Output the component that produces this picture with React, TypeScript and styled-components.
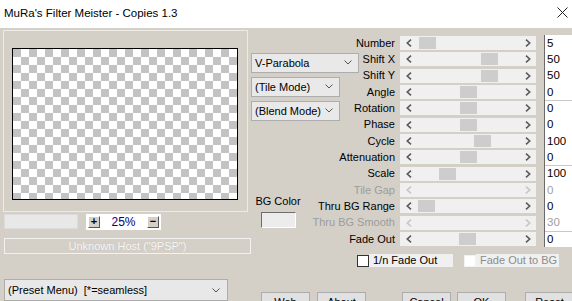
import React from 'react';
import styled, { createGlobalStyle } from 'styled-components';

const GlobalStyle = createGlobalStyle`
  html, body {
    margin: 0;
    padding: 0;
  }
  body {
    width: 572px;
    height: 301px;
    overflow: hidden;
    background: #d4d0c8;
    font-family: "Liberation Sans", Arial, sans-serif;
    font-size: 11px;
    color: #000;
  }
`;

type Param = {
  label: string;
  value: string;
  thumb?: number;
  disabled?: boolean;
  top?: boolean;
};

const params: Param[] = [
  { label: 'Number', value: '5', thumb: 19 },
  { label: 'Shift X', value: '50', thumb: 81 },
  { label: 'Shift Y', value: '50', thumb: 81 },
  { label: 'Angle', value: '0', thumb: 60 },
  { label: 'Rotation', value: '0', thumb: 60, top: true },
  { label: 'Phase', value: '0', thumb: 60 },
  { label: 'Cycle', value: '100', thumb: 74 },
  { label: 'Attenuation', value: '0', thumb: 60 },
  { label: 'Scale', value: '100', thumb: 39, top: true },
  { label: 'Tile Gap', value: '0', disabled: true },
  { label: 'Thru BG Range', value: '0', thumb: 18 },
  { label: 'Thru BG Smooth', value: '30', disabled: true },
  { label: 'Fade Out', value: '0', thumb: 59, top: true },
];

const Chevron = () => (
  <svg width="8" height="5" viewBox="0 0 8 5">
    <polyline points="0.5,0.5 4,4 7.5,0.5" fill="none" stroke="#555" strokeWidth="1" />
  </svg>
);

const Arrow = ({ dir, dim }: { dir: 'l' | 'r'; dim?: boolean }) => (
  <svg width="6" height="8" viewBox="0 0 6 8">
    <polyline
      points={dir === 'l' ? '5,0.7 1.3,4 5,7.3' : '1,0.7 4.7,4 1,7.3'}
      fill="none"
      stroke={dim ? '#c6c6c6' : '#5a5a5a'}
      strokeWidth="1.6"
    />
  </svg>
);

const App = () => {
  return (
    <>
      <GlobalStyle />
      <Window>
        <TitleBar>
          <Title>MuRa's Filter Meister - Copies 1.3</Title>
          <Close>
            <svg width="11" height="11" viewBox="0 0 11 11">
              <path d="M0.5 0.5 L10.5 10.5 M10.5 0.5 L0.5 10.5" stroke="#222" strokeWidth="1" />
            </svg>
          </Close>
        </TitleBar>

        <Body>
          <LeftCol>
            <PreviewPanel>
              <Preview />
            </PreviewPanel>
            <ZoomRow>
              <BlankField />
              <ZoomBox>
                <ZoomButton>+</ZoomButton>
                <Percent>25%</Percent>
                <ZoomButton>−</ZoomButton>
              </ZoomBox>
            </ZoomRow>
            <Status>Unknown Host ("9PSP")</Status>
            <PresetCombo>
              <span>(Preset Menu)&nbsp; [*=seamless]</span>
              <Chevron />
            </PresetCombo>
          </LeftCol>

          <RightCol>
            <TopArea>
              <MiddleControls>
                <Combo $width={108}>
                  <span>V-Parabola</span>
                  <Chevron />
                </Combo>
                <Combo $width={89}>
                  <span>(Tile Mode)</span>
                  <Chevron />
                </Combo>
                <Combo $width={89}>
                  <span>(Blend Mode)</span>
                  <Chevron />
                </Combo>
                <BgGroup>
                  <BgLabel>BG Color</BgLabel>
                  <Swatch />
                </BgGroup>
              </MiddleControls>

              <ParamList>
                {params.map((p) => (
                  <ParamRow key={p.label}>
                    <ParamLabel $disabled={p.disabled}>{p.label}</ParamLabel>
                    <Track>
                      <Arrow dir="l" dim={p.disabled} />
                      <Arrow dir="r" dim={p.disabled} />
                      {p.thumb !== undefined && <Thumb $left={p.thumb} />}
                    </Track>
                    <ValueBox $disabled={p.disabled} $top={p.top}>
                      {p.value}
                    </ValueBox>
                  </ParamRow>
                ))}
              </ParamList>
            </TopArea>

            <CheckRow>
              <CheckBox />
              <CheckLabel $width={84}>1/n Fade Out</CheckLabel>
              <CheckBox $disabled />
              <CheckLabel $width={83} $disabled>
                Fade Out to BG
              </CheckLabel>
            </CheckRow>

            <ButtonRow>
              <Button $gap={0}>Web</Button>
              <Button $gap={7}>About</Button>
              <Button $gap={36}>Cancel</Button>
              <Button $gap={6}>OK</Button>
              <Button $gap={19}>Reset</Button>
            </ButtonRow>
          </RightCol>
        </Body>
      </Window>
    </>
  );
};

export default App;

const Window = styled.div`
  width: 572px;
  height: 301px;
  display: flex;
  flex-direction: column;
  overflow: hidden;
  background: #d4d0c8;
`;

const TitleBar = styled.div`
  flex: none;
  height: 28px;
  background: #fff;
  display: flex;
  justify-content: space-between;
  padding-left: 4px;
`;

const Title = styled.span`
  font-size: 11.5px;
  line-height: 26px;
  color: #000;
`;

const Close = styled.div`
  margin: 7px 4px 0 0;
  height: 11px;
`;

const Body = styled.div`
  flex: 1;
  display: flex;
  min-height: 0;
`;

const LeftCol = styled.div`
  flex: none;
  width: 251px;
  box-sizing: border-box;
  padding: 2px 0 0 4px;
  display: flex;
  flex-direction: column;
`;

const PreviewPanel = styled.div`
  width: 245px;
  height: 183px;
  margin-left: -1px;
  box-sizing: border-box;
  border: 1px solid #ecebe6;
  padding: 17px 0 0 8px;
`;

const Preview = styled.div`
  width: 226px;
  height: 152px;
  box-sizing: border-box;
  border: 1px solid #000;
  background: repeating-conic-gradient(#fff 0 25%, #c3c3c3 0 50%) 0 0 / 16px 16px;
`;

const ZoomRow = styled.div`
  display: flex;
  align-items: flex-start;
  gap: 8px;
  margin-top: 2px;
`;

const BlankField = styled.div`
  width: 74px;
  height: 15px;
  box-sizing: border-box;
  background: #e8e8e8;
  border: 1px solid #dcdcdc;
`;

const ZoomBox = styled.div`
  width: 75px;
  height: 16px;
  box-sizing: border-box;
  background: #fff;
  display: flex;
  align-items: center;
  justify-content: space-between;
  padding: 0 2px;
`;

const ZoomButton = styled.div`
  width: 12px;
  height: 12px;
  box-sizing: border-box;
  background: #d4d0c8;
  border: 1px solid;
  border-color: #fff #555 #555 #fff;
  font-weight: bold;
  font-size: 11px;
  line-height: 9px;
  text-align: center;
`;

const Percent = styled.span`
  color: #000080;
  font-size: 12px;
  line-height: 16px;
`;

const Status = styled.div`
  margin-top: 8px;
  width: 247px;
  height: 16px;
  box-sizing: border-box;
  border: 1px solid #f2f2f0;
  color: #f8f8f8;
  text-shadow: 0 0 1px #b8b5ae;
  text-align: center;
  line-height: 14px;
`;

const PresetCombo = styled.div`
  margin-top: 25px;
  width: 224px;
  height: 22px;
  box-sizing: border-box;
  background: #e8e8e8;
  border: 1px solid #adadad;
  padding: 0 7px 0 3px;
  display: flex;
  align-items: center;
  justify-content: space-between;
  line-height: 20px;
`;

const RightCol = styled.div`
  flex: 1;
  min-width: 0;
  display: flex;
  flex-direction: column;
  padding-top: 6.83px;
`;

const TopArea = styled.div`
  display: grid;

  > * {
    grid-area: 1 / 1;
  }
`;

const MiddleControls = styled.div`
  display: flex;
  flex-direction: column;
  align-items: flex-start;
  gap: 4px;
  padding-top: 18.17px;
`;

const Combo = styled.div<{ $width: number }>`
  width: ${(p) => p.$width}px;
  height: 20px;
  box-sizing: border-box;
  background: #e9e9e9;
  border: 1px solid #adadad;
  padding: 0 6px 0 3px;
  display: flex;
  align-items: center;
  justify-content: space-between;
  line-height: 18px;
  white-space: nowrap;
`;

const BgGroup = styled.div`
  margin: 70px 0 0 6px;
  width: 42px;
  display: flex;
  flex-direction: column;
  align-items: center;
  gap: 4px;
`;

const BgLabel = styled.span`
  line-height: 13px;
  white-space: nowrap;
`;

const Swatch = styled.div`
  width: 35px;
  height: 16px;
  box-sizing: border-box;
  background: #ececec;
  border: 1px solid;
  border-color: #6d6d6d #fff #fff #6d6d6d;
`;

const ParamList = styled.div`
  display: flex;
  flex-direction: column;
`;

const ParamRow = styled.div`
  display: flex;
  align-items: center;
  height: 16.33px;
`;

const ParamLabel = styled.span<{ $disabled?: boolean }>`
  flex: none;
  width: 149px;
  box-sizing: border-box;
  padding-right: 5px;
  text-align: right;
  white-space: nowrap;
  line-height: 16.33px;
  color: ${(p) => (p.$disabled ? '#9c9c9c' : '#000')};
`;

const Track = styled.div`
  flex: none;
  position: relative;
  width: 136px;
  height: 14px;
  box-sizing: border-box;
  background: #f0f0f0;
  display: flex;
  align-items: center;
  justify-content: space-between;
  padding: 0 5px 0 6px;
`;

const Thumb = styled.div<{ $left: number }>`
  position: absolute;
  top: 1px;
  left: ${(p) => p.$left}px;
  width: 17px;
  height: 12px;
  background: #cdcdcd;
`;

const ValueBox = styled.div<{ $disabled?: boolean; $top?: boolean }>`
  flex: 1;
  align-self: stretch;
  margin-left: 8px;
  background: #fff;
  border-left: 1px solid #6a6a6a;
  box-shadow: ${(p) => (p.$top ? 'inset 0 1px 0 #c8c8c8' : 'none')};
  padding-left: 2px;
  font-size: 11.5px;
  line-height: 16.33px;
  color: ${(p) => (p.$disabled ? '#a0a0a0' : '#000')};
`;

const CheckRow = styled.div`
  margin-top: 7px;
  padding-left: 106px;
  display: flex;
  align-items: center;
  height: 13px;
`;

const CheckBox = styled.div<{ $disabled?: boolean }>`
  flex: none;
  width: 12px;
  height: 12px;
  box-sizing: border-box;
  background: #fff;
  border: 1px solid ${(p) => (p.$disabled ? '#f2f2f2' : '#333')};
  margin-left: ${(p) => (p.$disabled ? 11 : 0)}px;
`;

const CheckLabel = styled.span<{ $width: number; $disabled?: boolean }>`
  flex: none;
  width: ${(p) => p.$width}px;
  height: 13px;
  box-sizing: border-box;
  padding-left: 4px;
  background: #f0f0f0;
  line-height: 13px;
  white-space: nowrap;
  color: ${(p) => (p.$disabled ? '#8c8c8c' : '#000')};
`;

const ButtonRow = styled.div`
  margin-top: 25px;
  padding-left: 10px;
  display: flex;
`;

const Button = styled.div<{ $gap: number }>`
  flex: none;
  width: 49px;
  height: 23px;
  box-sizing: border-box;
  margin-left: ${(p) => p.$gap}px;
  background: #e1e1e1;
  border: 1px solid #adadad;
  text-align: center;
  line-height: 18px;
`;
